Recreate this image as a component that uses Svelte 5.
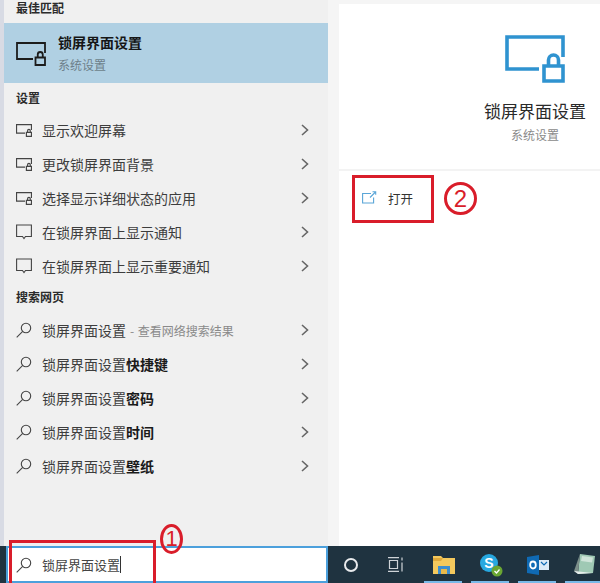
<script>
  const settings = ['显示欢迎屏幕', '更改锁屏界面背景', '选择显示详细状态的应用'];
  const notices = ['在锁屏界面上显示通知', '在锁屏界面上显示重要通知'];
  const web = ['快捷键', '密码', '时间', '壁纸'];
</script>

{#snippet chevron()}
  <svg class="chev" width="8" height="12" viewBox="0 0 8 12"><path d="M1 1l5.500 5L1 11" fill="none" stroke="#666" stroke-width="1.600"/></svg>
{/snippet}
{#snippet lockIcon(cls, sw)}
  <svg class={cls} viewBox="0 0 60 48" fill="none" stroke="currentColor" stroke-width={sw}>
    <path d="M34 34H2V2h56v20"/>
    <path d="M39 31h19v15H39zM43.500 31v-6a5 5 0 0 1 10 0v6"/>
  </svg>
{/snippet}
{#snippet bubble()}
  <svg class="ico" viewBox="0 0 16 16" fill="none" stroke="#444" stroke-width="1.100"><path d="M.6 1h14.800v11.500H9.500L8 14.500 6.500 12.500H.6z"/></svg>
{/snippet}
{#snippet search()}
  <svg class="ico" viewBox="0 0 16 16" fill="none" stroke="#444" stroke-width="1.100"><circle cx="10" cy="6" r="4.700"/><path d="M6.700 9.400L.7 15.400"/></svg>
{/snippet}

<div class="screen">
  <div class="main">
    <section class="results">
      <h2 class="h-first">最佳匹配</h2>
      <div class="best">
        {@render lockIcon('best-ico', 3.6)}
        <div class="best-text">
          <strong>锁屏界面设置</strong>
          <span>系统设置</span>
        </div>
      </div>
      <h2 class="h-set">设置</h2>
      {#each settings as s}
        <div class="row">{@render lockIcon('ico small', 4.4)}<span class="t">{s}</span>{@render chevron()}</div>
      {/each}
      {#each notices as s}
        <div class="row">{@render bubble()}<span class="t">{s}</span>{@render chevron()}</div>
      {/each}
      <h2 class="h-web">搜索网页</h2>
      <div class="row">{@render search()}<span class="t">锁屏界面设置<em>- 查看网络搜索结果</em></span>{@render chevron()}</div>
      {#each web as w}
        <div class="row">{@render search()}<span class="t">锁屏界面设置<b>{w}</b></span>{@render chevron()}</div>
      {/each}
    </section>
    <div class="gutter"></div>
    <section class="detail">
      <div class="hero">
        {@render lockIcon('hero-ico', 3.6)}
        <div class="hero-title">锁屏界面设置</div>
        <div class="hero-sub">系统设置</div>
      </div>
      <div class="open">
        <svg class="open-ico" width="15" height="13" viewBox="0 0 15 13" fill="none" stroke="#5aa6d8" stroke-width="1.100"><path d="M9 2.500H.6v9.500h11V6.500"/><path d="M8 6.500L13.500 1M10.500.8h3.200v3"/></svg>
        <span>打开</span>
      </div>
    </section>
  </div>
  <div class="bar">
    <div class="edge"></div>
    <div class="searchbox">
      {@render search()}
      <span class="q">锁屏界面设置</span><i class="caret"></i>
    </div>
    <div class="tray">
      <span class="cortana"></span>
      <svg class="tv" width="16" height="15" viewBox="0 0 16 15" fill="none" stroke="#cfd4d8" stroke-width="1.200"><path d="M0 .6h11M0 14.400h11M1.500 3.500h8v8h-8zM14 .5v3M14 5.500v9"/></svg>
      <div class="app act">
        <svg width="22" height="19" viewBox="0 0 22 19"><path d="M0 1h8l2 2h12v16H0z" fill="#f4c95d"/><path d="M0 3h10l-2 3H0z" fill="#e0a93a"/><path d="M5 11h12v8h-3v-5H8v5H5z" fill="#3c8ed0"/><path d="M8 14h6v5H8z" fill="#e8b94a"/></svg>
      </div>
      <div class="app act">
        <svg width="24" height="24" viewBox="0 0 24 24"><circle cx="10" cy="10" r="9" fill="#27a8e0"/><text x="10" y="15" font-size="14" font-weight="700" text-anchor="middle" fill="#fff" font-family="Liberation Sans, sans-serif">S</text><circle cx="18" cy="18" r="5.500" fill="#6aa632"/><path d="M15.500 18l2 2 3-3.500" fill="none" stroke="#fff" stroke-width="1.300"/></svg>
      </div>
      <div class="app act">
        <svg width="22" height="20" viewBox="0 0 22 20"><path d="M12 5h10v10H12z" fill="#dbeaf7"/><path d="M14 7l3 3 3-3" fill="none" stroke="#0f6ab4" stroke-width="1.200"/><path d="M0 2L12 0v20L0 18z" fill="#0f6ab4"/><ellipse cx="6" cy="10" rx="2.800" ry="3.500" fill="none" stroke="#fff" stroke-width="1.800"/></svg>
      </div>
      <div class="app act">
        <svg width="26" height="24" viewBox="0 0 22 24"><path d="M6 1l15 2-2 17-15 1z" fill="#9fc9b4"/><path d="M8 3l11 1.500-1 5L7 8z" fill="#cfe4d9"/><path d="M6 1L0 18l4 3z" fill="#7d8f8a"/><path d="M0 18l4 3 15-1z" fill="#e7eeec"/></svg>
      </div>
    </div>
  </div>

  <div class="mark mark-1"></div>
  <div class="circle circle-1">1</div>
  <div class="mark mark-2"></div>
  <div class="circle circle-2">2</div>
</div>

<style>
  :global(body) { margin: 0; background: #fff; }
  .screen {
    position: relative; width: 600px; height: 583px; overflow: hidden;
    display: flex; flex-direction: column;
    font-family: "Noto Sans CJK SC", "Noto Sans", sans-serif; color: #333;
  }
  .main { flex: 1; display: flex; min-height: 0; }
  .results { width: 324px; margin-left: 4px; background: #f0f0f0; box-shadow: -4px 0 0 #d8dbe4; }
  h2 { margin: 0; font-size: 12px; font-weight: 700; color: #2b2b2b; line-height: 16px; padding-left: 12px; }
  .h-first { height: 23px; }
  .h-set { padding-top: 7px; height: 23px; }
  .h-web { padding-top: 6px; padding-bottom: 8px; height: 16px; }
  .best { height: 60px; background: #b0d0e3; display: flex; align-items: center; padding-left: 12px; color: #1c1c1c; }
  .best-ico { width: 30px; height: 24px; margin-top: 1px; }
  .best-text { margin-left: 12px; display: flex; flex-direction: column; }
  .best-text strong { font-size: 14px; line-height: 18px; color: #161616; font-weight: 700; }
  .best-text span { font-size: 12px; line-height: 18px; margin-top: 5px; color: #6d7f8a; }
  .row { height: 34px; display: flex; align-items: center; padding-left: 12px; font-size: 14px; color: #3d3d3d; }
  .ico { width: 16px; height: 16px; flex: none; color: #444; }
  .small { height: 13px; }
  .t { margin-left: 10px; flex: 1; white-space: nowrap; }
  .t b { font-weight: 700; color: #1a1a1a; }
  .t em { font-style: normal; font-size: 12px; color: #8a8a8a; margin-left: 4px; word-spacing: 1px; }
  .chev { margin-right: 19px; flex: none; }
  .gutter { width: 11px; background: #f5f5f5; }
  .detail { flex: 1; padding-top: 4px; box-shadow: inset 0 4px 0 #f5f5f5; }
  .hero { height: 167px; border-bottom: 2px solid #f3f3f3; display: flex; flex-direction: column; align-items: center; box-sizing: border-box; padding-top: 31px; padding-left: 131px; }
  .hero-ico { width: 60px; height: 48px; color: #2f93d0; flex: none; }
  .hero-title { font-size: 17px; line-height: 24px; margin-top: 16px; color: #2a2a2a; white-space: nowrap; }
  .hero-sub { font-size: 12px; line-height: 18px; margin-top: 3px; color: #8a8a8a; white-space: nowrap; }
  .open { display: flex; align-items: center; height: 54px; padding-left: 23px; gap: 11px; font-size: 12.5px; color: #333; }
  .open-ico { margin-top: -2px; }
  .bar { height: 37px; flex: none; background: #1f3340; display: flex; }
  .edge { width: 6px; }
  .searchbox { width: 322px; border: 2px solid #4ca0dc; background: #fff; display: flex; align-items: center; padding-left: 8px; font-size: 13px; color: #444; height: 37px; box-sizing: border-box; flex: none; }
  .q { margin-left: 10px; }
  .caret { width: 1px; height: 17px; background: #333; }
  .tray { flex: 1; display: flex; align-items: center; padding-left: 16px; min-width: 0; }
  .cortana { width: 10px; height: 10px; border: 2px solid #e8eaec; border-radius: 50%; flex: none; }
  .tv { margin-left: 30px; margin-right: 16px; flex: none; }
  .app { width: 47px; height: 37px; flex: none; display: flex; align-items: center; justify-content: center; position: relative; }
  .act::after { content: ""; position: absolute; left: 4px; right: 5px; bottom: 0; height: 2px; background: #79b9e8; }
  .mark { position: absolute; border: 3px solid #d91d2a; box-sizing: border-box; }
  .mark-1 { left: 9px; top: 540px; width: 147px; height: 43px; border-bottom: 0; }
  .mark-2 { left: 352px; top: 175px; width: 82px; height: 48px; }
  .circle { position: absolute; color: #d91d2a; border: 3px solid #d91d2a; border-radius: 50%; box-sizing: border-box; display: flex; align-items: center; justify-content: center; font-family: "Liberation Sans", sans-serif; }
  .circle-1 { left: 160px; top: 524px; width: 23px; height: 30px; font-size: 22px; }
  .circle-2 { left: 444px; top: 182px; width: 33px; height: 33px; font-size: 24px; }
</style>
